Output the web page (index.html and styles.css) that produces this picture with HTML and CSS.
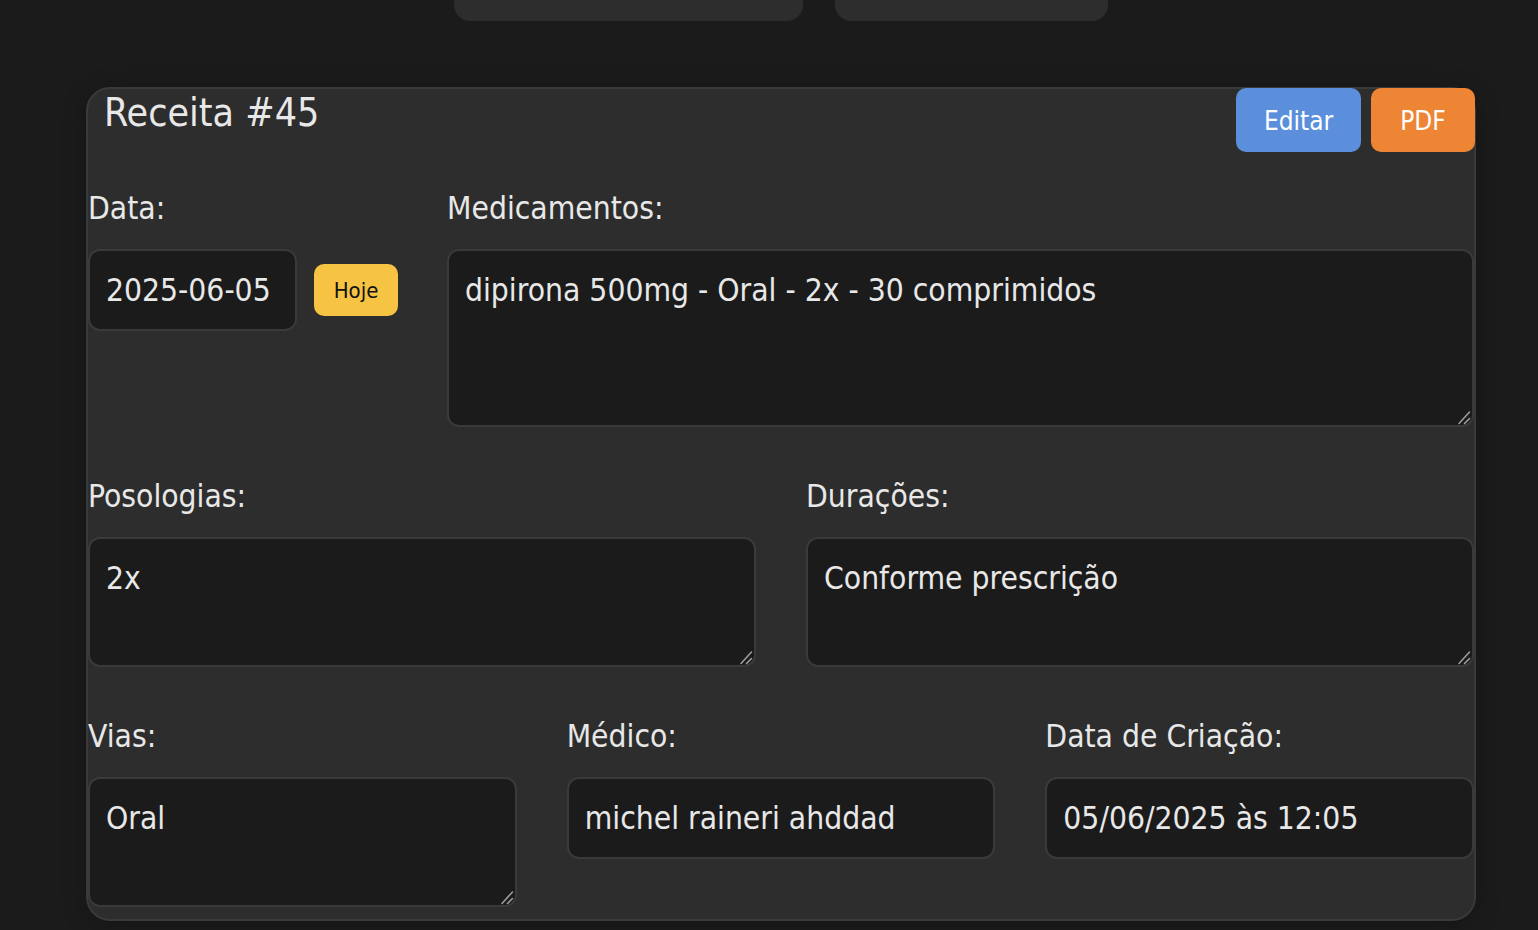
FILE: index.html
```html
<!DOCTYPE html>
<html lang="pt-BR">
<head>
<meta charset="utf-8">
<title>Receita #45</title>
<link rel="stylesheet" href="styles.css">
</head>
<body>
<div class="topbar">
  <div class="top-card top-card-a"></div>
  <div class="top-card top-card-b"></div>
</div>

<section class="card">
  <header class="card-header">
    <h2 class="card-title">Receita #45</h2>
    <div class="actions">
      <button class="btn btn-edit">Editar</button>
      <button class="btn btn-pdf">PDF</button>
    </div>
  </header>

  <div class="form">
    <div class="row row-1">
      <div class="field">
        <label class="label">Data:</label>
        <div class="date-line">
          <div class="input input-date">2025-06-05</div>
          <button class="btn-today">Hoje</button>
        </div>
      </div>
      <div class="field">
        <label class="label">Medicamentos:</label>
        <div class="area-wrap">
          <textarea class="input area area-tall" readonly>dipirona 500mg - Oral - 2x - 30 comprimidos</textarea>
          <svg class="grip" width="16" height="16" viewBox="0 0 16 16"><path d="M3 14.5 L13.5 3 M8.5 14.5 L13.5 9.5"/></svg>
        </div>
      </div>
    </div>

    <div class="row row-2">
      <div class="field">
        <label class="label">Posologias:</label>
        <div class="area-wrap">
          <textarea class="input area area-mid" readonly>2x</textarea>
          <svg class="grip" width="16" height="16" viewBox="0 0 16 16"><path d="M3 14.5 L13.5 3 M8.5 14.5 L13.5 9.5"/></svg>
        </div>
      </div>
      <div class="field">
        <label class="label">Durações:</label>
        <div class="area-wrap">
          <textarea class="input area area-mid" readonly>Conforme prescrição</textarea>
          <svg class="grip" width="16" height="16" viewBox="0 0 16 16"><path d="M3 14.5 L13.5 3 M8.5 14.5 L13.5 9.5"/></svg>
        </div>
      </div>
    </div>

    <div class="row row-3">
      <div class="field">
        <label class="label">Vias:</label>
        <div class="area-wrap">
          <textarea class="input area area-mid" readonly>Oral</textarea>
          <svg class="grip" width="16" height="16" viewBox="0 0 16 16"><path d="M3 14.5 L13.5 3 M8.5 14.5 L13.5 9.5"/></svg>
        </div>
      </div>
      <div class="field">
        <label class="label">Médico:</label>
        <div class="input">michel raineri ahddad</div>
      </div>
      <div class="field">
        <label class="label">Data de Criação:</label>
        <div class="input">05/06/2025 às 12:05</div>
      </div>
    </div>
  </div>
</section>
</body>
</html>
```

FILE: styles.css
```css
* {
  box-sizing: border-box;
}

html, body {
  margin: 0;
  padding: 0;
  background: #1b1b1b;
}

body {
  font-family: "DejaVu Sans Condensed", "Liberation Sans", sans-serif;
  color: #e8e8e8;
  width: 1538px;
  height: 930px;
  overflow: hidden;
}

.topbar {
  display: flex;
  gap: 32px;
  padding-left: 454px;
  height: 21px;
}

.top-card {
  height: 21px;
  background: #2d2d2d;
  border-radius: 0 0 16px 16px;
}

.top-card-a { width: 349px; }
.top-card-b { width: 273px; }

.card {
  margin: 66px 0 0 86px;
  width: 1390px;
  background: #2d2d2d;
  border: 2px solid #3a3a3a;
  border-radius: 24px;
  padding: 0 0 12px 0;
  box-shadow: 0 4px 24px rgba(0, 0, 0, 0.25);
}

.card-header {
  display: flex;
  justify-content: space-between;
  align-items: flex-start;
}

.card-title {
  margin: 0;
  padding-left: 16px;
  font-size: 39px;
  line-height: 48px;
  font-weight: normal;
  color: #e8e8e8;
}

.actions {
  display: flex;
  gap: 10px;
  margin: -1px -1px 0 0;
}

.btn {
  height: 64px;
  padding: 0;
  border: none;
  border-radius: 10px;
  font-family: inherit;
  font-size: 26px;
  line-height: 30px;
  padding-top: 2px;
  color: #ffffff;
  cursor: pointer;
}

.btn-edit { background: #5b8fdc; width: 125px; }
.btn-pdf { background: #ee8535; width: 104px; }

.form {
  display: flex;
  flex-direction: column;
  gap: 46px;
  padding-top: 33px;
}

.row {
  display: grid;
  column-gap: 50px;
}

.row-1 { grid-template-columns: auto 1fr; column-gap: 49px; }
.row-2 { grid-template-columns: 1fr 1fr; }
.row-3 { grid-template-columns: 1fr 1fr 1fr; }

.field {
  display: flex;
  flex-direction: column;
  min-width: 0;
}

.label {
  display: block;
  font-size: 31.5px;
  line-height: 46px;
  margin-bottom: 18px;
  color: #e8e8e8;
}

.date-line {
  display: flex;
  align-items: center;
  gap: 17px;
}

.input {
  display: block;
  width: 100%;
  height: 82px;
  padding: 16px;
  background: #1b1b1b;
  border: 2px solid #3a3a3a;
  border-radius: 12px;
  font-family: inherit;
  font-size: 31.5px;
  line-height: 46px;
  color: #e8e8e8;
  white-space: nowrap;
}

.input-date {
  width: 209px;
}

.area-wrap {
  position: relative;
}

.area {
  resize: none;
  white-space: pre-wrap;
  outline: none;
  overflow: hidden;
}

.area-tall { height: 178px; }
.area-mid { height: 130px; }

.grip {
  position: absolute;
  right: 2px;
  bottom: 2px;
  fill: none;
  stroke: #9c9c9c;
  stroke-width: 1.6;
  stroke-linecap: round;
}

.btn-today {
  width: 84px;
  height: 52px;
  padding: 0;
  border: none;
  border-radius: 10px;
  background: #f6c343;
  color: #111111;
  font-family: inherit;
  font-size: 22px;
}
```
